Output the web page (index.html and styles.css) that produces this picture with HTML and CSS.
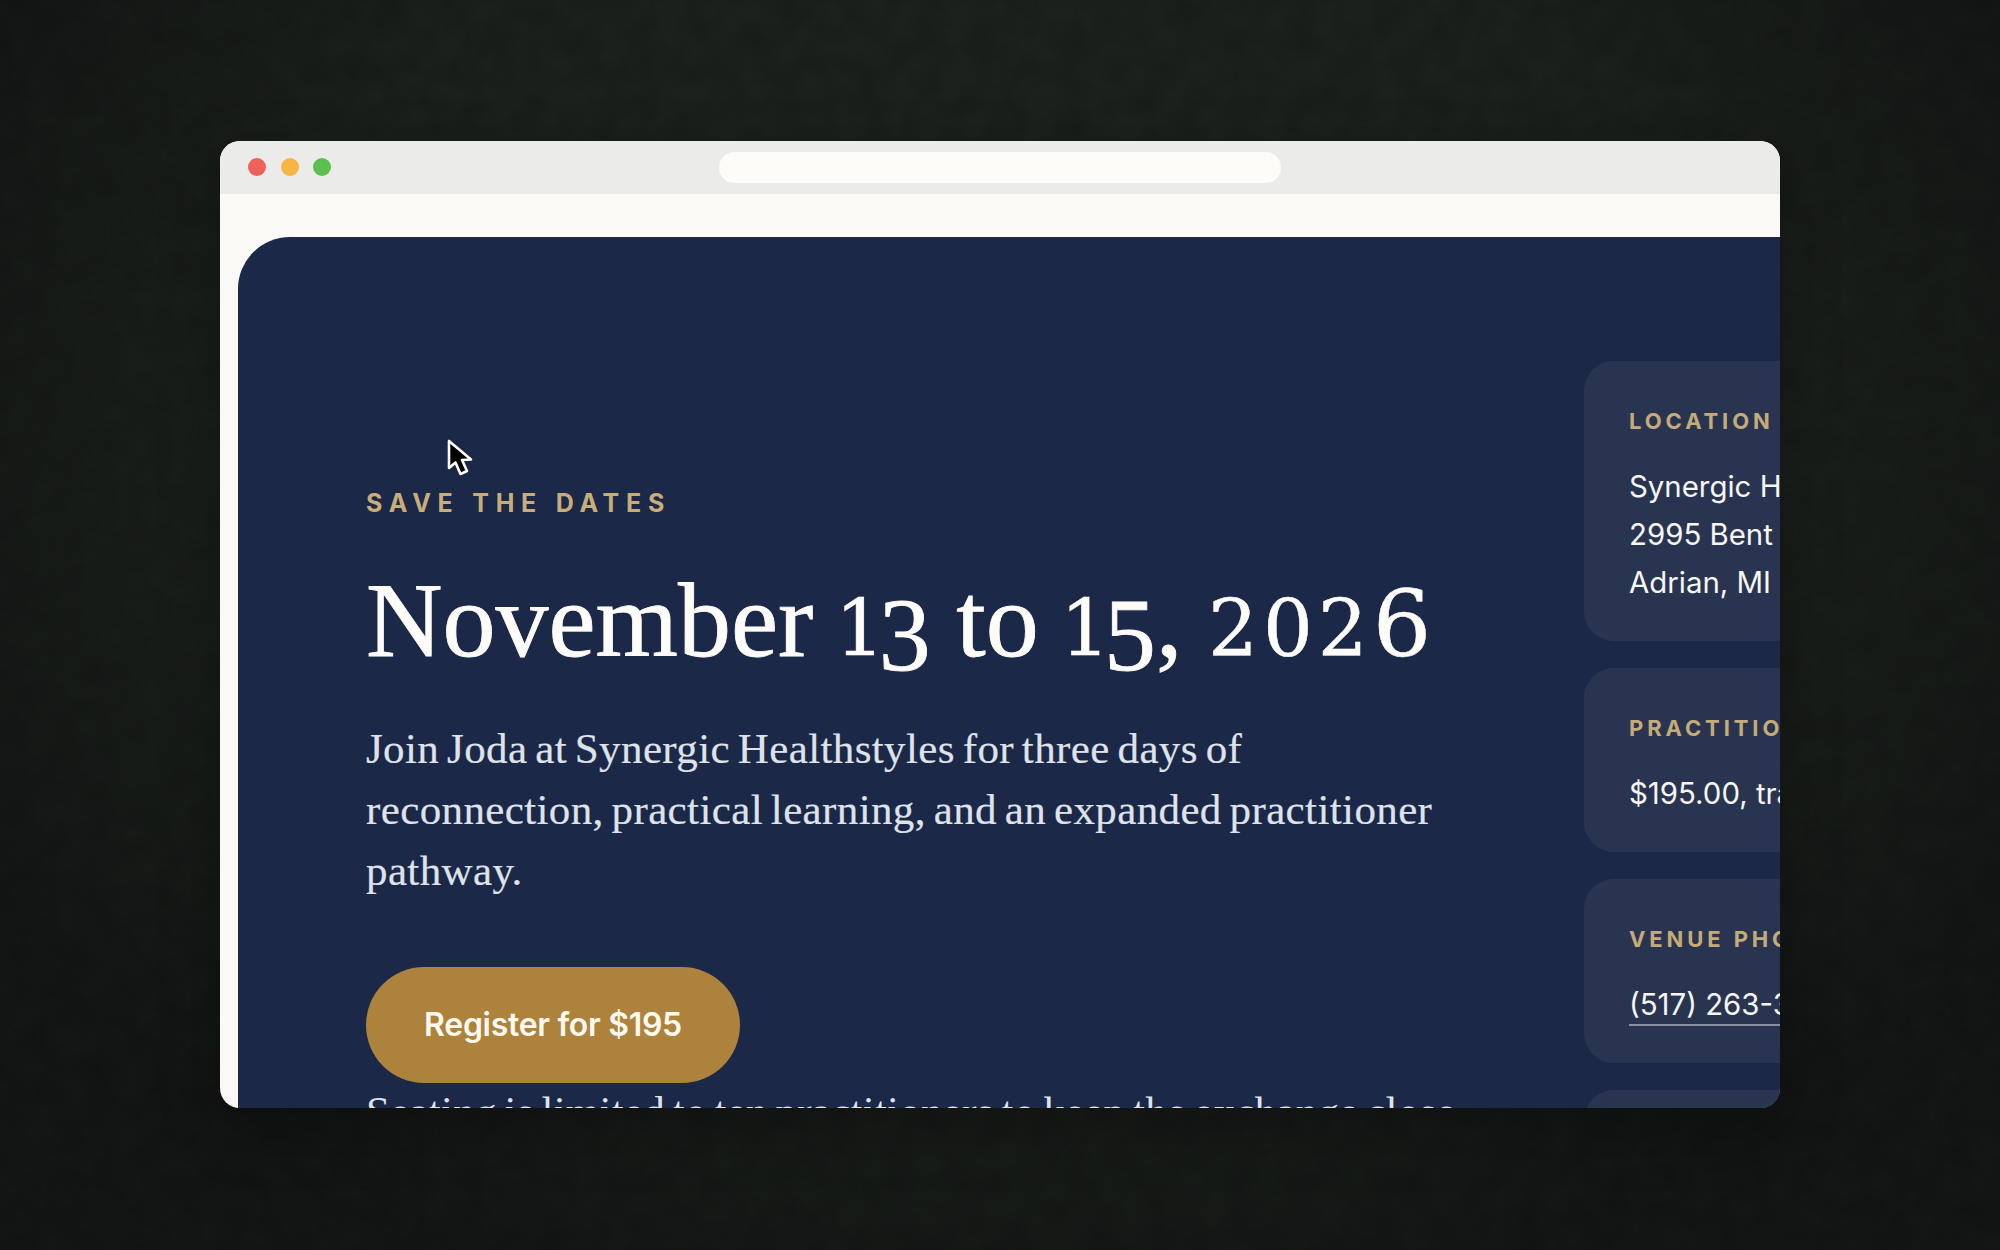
FILE: index.html
```html
<!DOCTYPE html>
<html lang="en">
<head>
<meta charset="utf-8">
<title>Save the dates</title>
<link rel="stylesheet" href="styles.css">
</head>
<body>
<svg class="grain" width="2000" height="1250" aria-hidden="true">
  <filter id="grain-noise"><feTurbulence type="fractalNoise" baseFrequency="0.035" numOctaves="4" seed="7"/><feColorMatrix values="0 0 0 0 0  0 0 0 0 0  0 0 0 0 0  0 0 0 1.4 -0.45"/></filter>
  <rect width="2000" height="1250" filter="url(#grain-noise)"/>
</svg>
<main class="window">
  <header class="titlebar">
    <div class="dots">
      <span class="dot dot-red"></span>
      <span class="dot dot-yellow"></span>
      <span class="dot dot-green"></span>
    </div>
    <div class="address"></div>
  </header>
  <div class="page">
    <section class="hero">
      <div class="intro">
        <p class="eyebrow">SAVE THE DATES</p>
        <h1 class="headline">November <span class="num-one">1</span><span class="num-d">3</span> to <span class="num-one">1</span><span class="num-d">5</span>, <span class="num-x">202</span><span class="num-a">6</span></h1>
        <p class="lede">Join Joda at Synergic Healthstyles for three days of<br>reconnection, practical learning, and an expanded practitioner<br>pathway.</p>
        <a class="cta" href="#">Register for $195</a>
        <p class="note">Seating is limited to ten practitioners to keep the exchange close</p>
      </div>
      <aside class="facts">
        <div class="card">
          <p class="label">LOCATION</p>
          <p class="value">Synergic Healthstyles<br>2995 Bent Oak Avenue<br>Adrian, MI 49221</p>
        </div>
        <div class="card">
          <p class="label">PRACTITIONER TRACK</p>
          <p class="value">$195.00, transferable</p>
        </div>
        <div class="card">
          <p class="label">VENUE PHONE</p>
          <p class="value"><a class="phone" href="#">(517) 263-3000</a></p>
        </div>
        <div class="card">
          <p class="label">HOURS</p>
        </div>
      </aside>
    </section>
  </div>
  <svg class="cursor" width="28" height="42" viewBox="0 0 28 42" aria-hidden="true">
    <path d="M2 2 L2 29 L8.5 23.5 L13.5 35 L20 32 L15 21 L24 20.5 Z" fill="#000" stroke="#fff" stroke-width="2.6" stroke-linejoin="round"/>
  </svg>
</main>
</body>
</html>
```
FILE: styles.css
```css
* { box-sizing: border-box; }
html, body { margin: 0; padding: 0; }
body {
  width: 2000px;
  height: 1250px;
  overflow: hidden;
  padding: 141px 220px 142px;
  background: radial-gradient(ellipse 1150px 900px at 50% 35%, #1d231f 0%, #1b201c 65%, #131614 100%);
  position: relative;
}
.grain { position: absolute; left: 0; top: 0; opacity: .15; }
.window {
  position: relative;
  width: 1560px;
  height: 967px;
  border-radius: 20px;
  overflow: hidden;
  background: #fbf9f5;
  display: flex;
  flex-direction: column;
  box-shadow: 0 20px 60px rgba(0,0,0,.3);
}
.titlebar {
  height: 53px;
  flex: none;
  background: #ebebe9;
  display: flex;
  align-items: center;
  justify-content: center;
  position: relative;
}
.dots { position: absolute; left: 28px; top: 17px; display: flex; gap: 14.5px; }
.dot { width: 18px; height: 18px; border-radius: 50%; }
.dot-red { background: #ee625a; }
.dot-yellow { background: #f6b645; }
.dot-green { background: #5cc04f; }
.address { width: 562px; height: 31px; border-radius: 16px; background: #fdfcf9; }
.page { flex: 1; padding: 43px 0 0 18px; min-height: 0; }
.hero {
  height: 1100px;
  width: 1700px;
  background: #1b2848;
  border-top-left-radius: 52px;
  display: flex;
  padding-left: 128px;
}
.intro { width: 1218px; flex: none; padding-top: 250px; }
.eyebrow {
  margin: 0;
  font: 700 25px/32px Inter, sans-serif;
  letter-spacing: 6.75px;
  color: #c8ad7a;
}
.headline {
  margin: 42px 0 0;
  font: 400 106px/120px "Liberation Serif", serif;
  -webkit-text-stroke: .8px #fdfcf9;
  color: #fdfcf9;
  white-space: nowrap;
  word-spacing: -1px;
}
.num-one, .num-x, .num-a {
  font-family: "DejaVu Serif", serif;
  -webkit-text-stroke: .5px #fdfcf9;
}
.num-one { font-size: .74em; letter-spacing: -10px; position: relative; left: -4px; }
.num-x { font-size: .74em; letter-spacing: 5px; }
.num-a { font-size: .87em; }
.num-d { position: relative; top: .13em; font-size: .98em; }
.lede {
  margin: 29px 0 0;
  font: 400 43px/61px "Liberation Serif", serif;
  letter-spacing: .38px;
  word-spacing: -3.3px;
  -webkit-text-stroke: .2px #dfe2e8;
  color: #dfe2e8;
  white-space: nowrap;
}
.cta {
  display: inline-block;
  margin-top: 66px;
  width: 374px;
  height: 116px;
  border-radius: 58px;
  background: #ad823c;
  color: #fff9ef;
  text-align: center;
  text-decoration: none;
  font: 600 32px/116px Inter, sans-serif;
  letter-spacing: -.3px;
}
.note {
  margin: 5px 0 0;
  font: 400 43px/48px "Liberation Serif", serif;
  letter-spacing: .26px;
  word-spacing: -3.3px;
  color: #dfe2e8;
  white-space: nowrap;
}
.facts {
  width: 600px;
  flex: none;
  padding-top: 124px;
  display: flex;
  flex-direction: column;
  gap: 27px;
}
.card {
  background: #293550;
  border-radius: 30px;
  padding: 46px 45px 34px;
}
.label {
  margin: 0 0 28px;
  font: 700 22px/28px Inter, sans-serif;
  letter-spacing: 3.9px;
  color: #c5ab78;
  white-space: nowrap;
}
.value {
  margin: 0;
  font: 400 29.4px/48px Inter, sans-serif;
  color: #f6f6f3;
  white-space: nowrap;
}
.phone {
  color: #f6f6f3;
  text-decoration: none;
  display: inline-block;
  line-height: 39px;
  border-bottom: 2px solid rgba(255,255,255,.45);
}
.cursor { position: absolute; left: 227px; top: 298px; }
```
